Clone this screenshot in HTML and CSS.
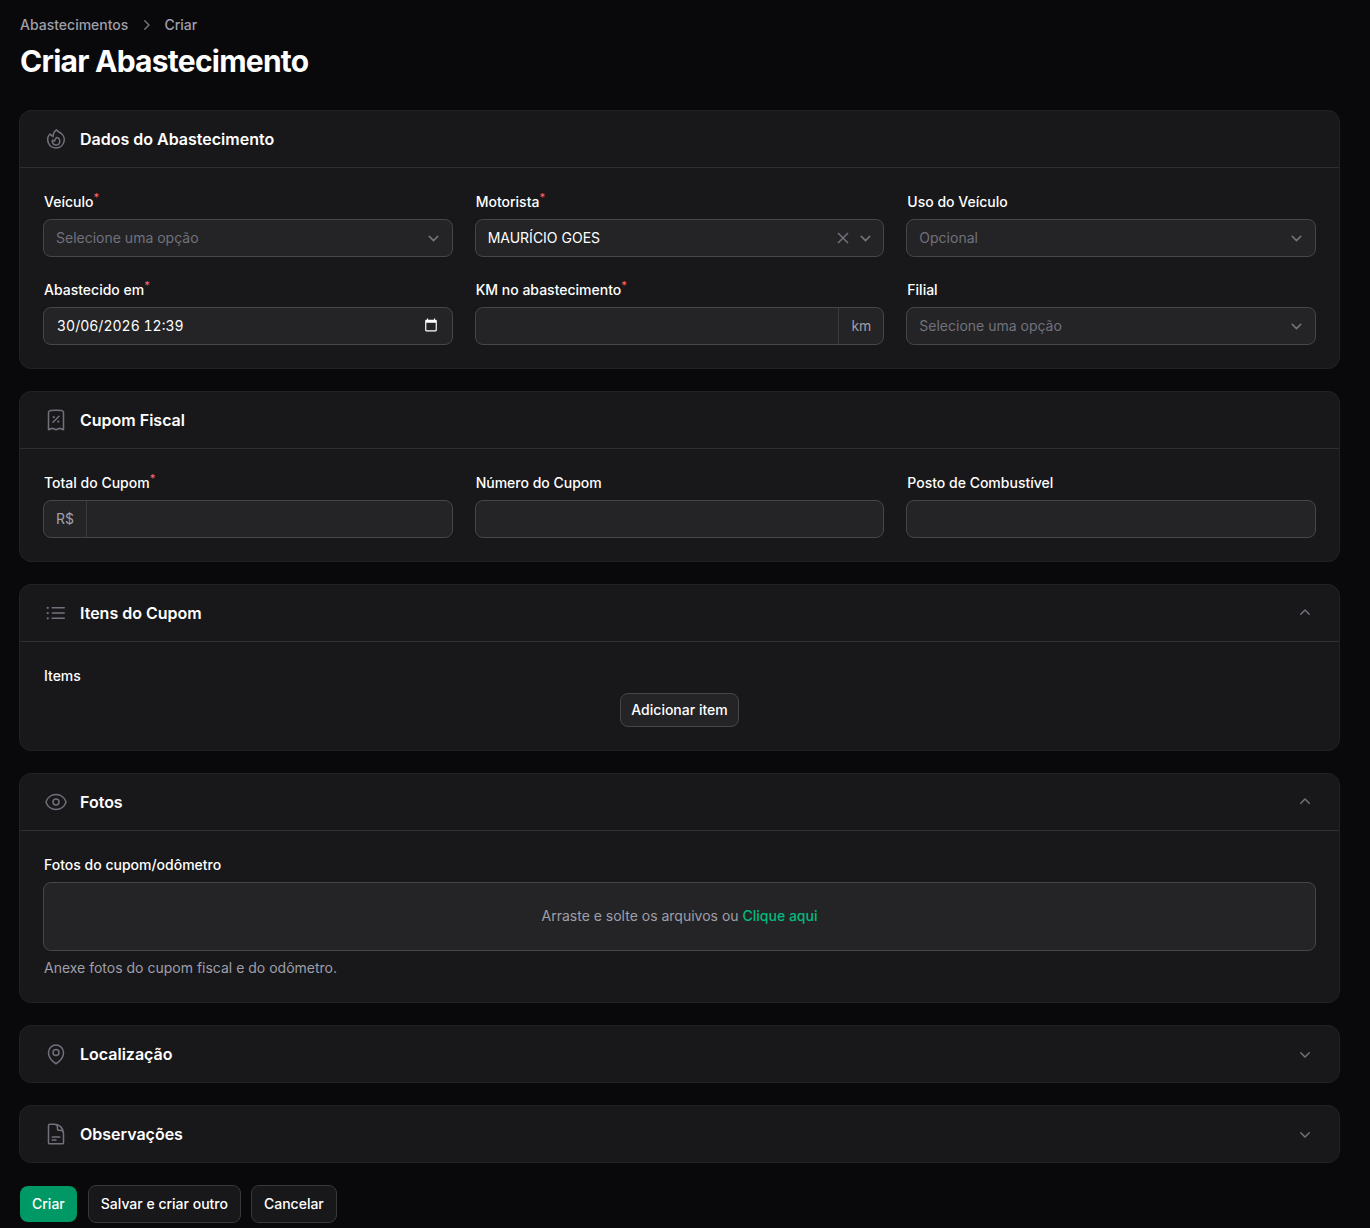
FILE: index.html
```html
<!DOCTYPE html>
<html lang="pt-BR">
<head>
<meta charset="utf-8">
<meta name="viewport" content="width=device-width, initial-scale=1">
<title>Criar Abastecimento</title>
<link rel="stylesheet" href="styles.css">
</head>
<body>
<svg class="sprite" aria-hidden="true">
  <symbol id="chevron-select" viewBox="0 0 20 20"><path d="M6 8l4 4 4-4"/></symbol>
  <symbol id="chevron-down" viewBox="0 0 20 20"><path d="M5.22 8.22a.75.75 0 0 1 1.06 0L10 11.94l3.72-3.72a.75.75 0 1 1 1.06 1.06l-4.25 4.25a.75.75 0 0 1-1.06 0L5.22 9.28a.75.75 0 0 1 0-1.06Z"/></symbol>
  <symbol id="chevron-up" viewBox="0 0 20 20"><path d="M9.47 6.47a.75.75 0 0 1 1.06 0l4.25 4.25a.75.75 0 1 1-1.06 1.06L10 8.06l-3.72 3.72a.75.75 0 0 1-1.06-1.06l4.25-4.25Z"/></symbol>
</svg>
<main class="page">
  <header class="page-header">
    <nav class="breadcrumbs" aria-label="Trilha">
      <a href="#">Abastecimentos</a>
      <svg class="icon-sm" viewBox="0 0 20 20" aria-hidden="true"><path d="M8.22 5.22a.75.75 0 0 1 1.06 0l4.25 4.25a.75.75 0 0 1 0 1.06l-4.25 4.25a.75.75 0 0 1-1.06-1.06L11.94 10 8.22 6.28a.75.75 0 0 1 0-1.06Z"/></svg>
      <a href="#">Criar</a>
    </nav>
    <h1 class="page-title">Criar Abastecimento</h1>
  </header>

  <form class="form" onsubmit="return false">
    <section class="card">
      <header class="card-header">
        <svg class="icon" viewBox="0 0 24 24" aria-hidden="true"><path d="M15.362 5.214A8.252 8.252 0 0 1 12 21 8.25 8.25 0 0 1 6.038 7.047 8.287 8.287 0 0 0 9 9.601a8.983 8.983 0 0 1 3.361-6.867 8.21 8.21 0 0 0 3 2.48Z"/><path d="M12 18a3.75 3.75 0 0 0 .495-7.468 5.99 5.99 0 0 0-1.925 3.547 5.975 5.975 0 0 1-2.133-1.001A3.75 3.75 0 0 0 12 18Z"/></svg>
        <h2 class="card-title">Dados do Abastecimento</h2>
      </header>
      <div class="card-body grid">
        <div class="field">
          <label class="label" for="veiculo">Veículo<sup class="required">*</sup></label>
          <div class="control select">
            <select id="veiculo" class="empty"><option>Selecione uma opção</option></select>
            <svg class="chevron" aria-hidden="true"><use href="#chevron-select"/></svg>
          </div>
        </div>
        <div class="field">
          <label class="label" for="motorista">Motorista<sup class="required">*</sup></label>
          <div class="control select">
            <select id="motorista"><option>MAURÍCIO GOES</option></select>
            <button class="clear" type="button" aria-label="Limpar"><svg viewBox="0 0 12 12" aria-hidden="true"><path d="M1 1l10 10M11 1 1 11"/></svg></button>
            <svg class="chevron" aria-hidden="true"><use href="#chevron-select"/></svg>
          </div>
        </div>
        <div class="field">
          <label class="label" for="uso">Uso do Veículo</label>
          <div class="control select">
            <select id="uso" class="empty"><option>Opcional</option></select>
            <svg class="chevron" aria-hidden="true"><use href="#chevron-select"/></svg>
          </div>
        </div>
        <div class="field">
          <label class="label" for="data">Abastecido em<sup class="required">*</sup></label>
          <div class="control">
            <input id="data" class="date" type="text" value="30/06/2026 12:39">
            <button class="calendar" type="button" aria-label="Abrir calendário"><svg viewBox="0 0 24 24" aria-hidden="true"><path d="M20 3h-1V1h-2v2H7V1H5v2H4c-1.100 0-2 .9-2 2v16c0 1.100.9 2 2 2h16c1.100 0 2-.9 2-2V5c0-1.100-.9-2-2-2zm0 18H4V8h16v13z"/></svg></button>
          </div>
        </div>
        <div class="field">
          <label class="label" for="km">KM no abastecimento<sup class="required">*</sup></label>
          <div class="control">
            <input id="km" type="text">
            <span class="affix suffix">km</span>
          </div>
        </div>
        <div class="field">
          <label class="label" for="filial">Filial</label>
          <div class="control select">
            <select id="filial" class="empty"><option>Selecione uma opção</option></select>
            <svg class="chevron" aria-hidden="true"><use href="#chevron-select"/></svg>
          </div>
        </div>
      </div>
    </section>

    <section class="card">
      <header class="card-header">
        <svg class="icon" viewBox="0 0 24 24" aria-hidden="true"><path d="m9 14.250 6-6m4.500-3.493V21.750l-3.750-1.500-3.750 1.500-3.750-1.500-3.750 1.500V4.757c0-1.108.806-2.057 1.907-2.185a48.507 48.507 0 0 1 11.186 0c1.100.128 1.907 1.077 1.907 2.185ZM9.750 9h.008v.008H9.750V9Zm.375 0a.375.375 0 1 1-.75 0 .375.375 0 0 1 .75 0Zm4.125 4.500h.008v.008h-.008V13.500Zm.375 0a.375.375 0 1 1-.75 0 .375.375 0 0 1 .75 0Z"/></svg>
        <h2 class="card-title">Cupom Fiscal</h2>
      </header>
      <div class="card-body grid">
        <div class="field">
          <label class="label" for="total">Total do Cupom<sup class="required">*</sup></label>
          <div class="control">
            <span class="affix prefix">R$</span>
            <input id="total" type="text">
          </div>
        </div>
        <div class="field">
          <label class="label" for="numero">Número do Cupom</label>
          <div class="control"><input id="numero" type="text"></div>
        </div>
        <div class="field">
          <label class="label" for="posto">Posto de Combustível</label>
          <div class="control"><input id="posto" type="text"></div>
        </div>
      </div>
    </section>

    <section class="card">
      <header class="card-header">
        <svg class="icon" viewBox="0 0 24 24" aria-hidden="true"><path d="M8.250 6.750h12M8.250 12h12m-12 5.250h12M3.750 6.750h.007v.008H3.750V6.750Zm.375 0a.375.375 0 1 1-.75 0 .375.375 0 0 1 .75 0ZM3.750 12h.007v.008H3.750V12Zm.375 0a.375.375 0 1 1-.75 0 .375.375 0 0 1 .75 0Zm-.375 5.250h.007v.008H3.750v-.008Zm.375 0a.375.375 0 1 1-.75 0 .375.375 0 0 1 .75 0Z"/></svg>
        <h2 class="card-title">Itens do Cupom</h2>
        <button class="toggle" type="button" aria-label="Recolher Itens do Cupom" aria-expanded="true"><svg class="icon-sm" aria-hidden="true"><use href="#chevron-up"/></svg></button>
      </header>
      <div class="card-body field">
        <span class="label">Items</span>
        <button class="btn btn-small" type="button">Adicionar item</button>
      </div>
    </section>

    <section class="card">
      <header class="card-header">
        <svg class="icon" viewBox="0 0 24 24" aria-hidden="true"><path d="M2.036 12.322a1.012 1.012 0 0 1 0-.639C3.423 7.510 7.360 4.500 12 4.500c4.638 0 8.573 3.007 9.963 7.178.07.207.07.431 0 .639C20.577 16.490 16.640 19.500 12 19.500c-4.638 0-8.573-3.007-9.963-7.178Z"/><path d="M15 12a3 3 0 1 1-6 0 3 3 0 0 1 6 0Z"/></svg>
        <h2 class="card-title">Fotos</h2>
        <button class="toggle" type="button" aria-label="Recolher Fotos" aria-expanded="true"><svg class="icon-sm" aria-hidden="true"><use href="#chevron-up"/></svg></button>
      </header>
      <div class="card-body field">
        <label class="label" for="fotos">Fotos do cupom/odômetro</label>
        <div class="dropzone">
          <span>Arraste e solte os arquivos ou <label class="browse" for="fotos">Clique aqui</label></span>
          <input id="fotos" class="file" type="file" multiple>
        </div>
        <p class="help">Anexe fotos do cupom fiscal e do odômetro.</p>
      </div>
    </section>

    <section class="card">
      <header class="card-header">
        <svg class="icon" viewBox="0 0 24 24" aria-hidden="true"><path d="M15 10.500a3 3 0 1 1-6 0 3 3 0 0 1 6 0Z"/><path d="M19.500 10.500c0 7.142-7.500 11.250-7.500 11.250S4.500 17.642 4.500 10.500a7.500 7.500 0 1 1 15 0Z"/></svg>
        <h2 class="card-title">Localização</h2>
        <button class="toggle" type="button" aria-label="Expandir Localização" aria-expanded="false"><svg class="icon-sm" aria-hidden="true"><use href="#chevron-down"/></svg></button>
      </header>
    </section>

    <section class="card">
      <header class="card-header">
        <svg class="icon" viewBox="0 0 24 24" aria-hidden="true"><path d="M19.500 14.250v-2.625a3.375 3.375 0 0 0-3.375-3.375h-1.500A1.125 1.125 0 0 1 13.500 7.125v-1.500a3.375 3.375 0 0 0-3.375-3.375H8.250m0 12.750h7.500m-7.500 3H12M10.500 2.250H5.625c-.621 0-1.125.504-1.125 1.125v17.250c0 .621.504 1.125 1.125 1.125h12.750c.621 0 1.125-.504 1.125-1.125V11.250a9 9 0 0 0-9-9Z"/></svg>
        <h2 class="card-title">Observações</h2>
        <button class="toggle" type="button" aria-label="Expandir Observações" aria-expanded="false"><svg class="icon-sm" aria-hidden="true"><use href="#chevron-down"/></svg></button>
      </header>
    </section>

    <div class="actions">
      <button class="btn btn-primary" type="submit">Criar</button>
      <button class="btn btn-dark" type="button">Salvar e criar outro</button>
      <button class="btn btn-dark" type="button">Cancelar</button>
    </div>
  </form>
</main>
</body>
</html>
```
FILE: styles.css
```css
*, *::before, *::after { box-sizing: border-box; }

body {
  margin: 0;
  background: #09090b;
  color: #fff;
  font: 400 14px/20px Inter, "Liberation Sans", sans-serif;
}

h1, h2, p { margin: 0; }
a { color: inherit; text-decoration: none; }
button, input, select { font: inherit; color: inherit; }
button { cursor: pointer; }

.sprite { display: none; }
.icon { flex: none; width: 24px; height: 24px; fill: none; stroke: #71717b; stroke-width: 1.5; stroke-linecap: round; stroke-linejoin: round; }
.icon-sm { flex: none; width: 20px; height: 20px; fill: #71717b; }

.page { padding: 15px 30px 5px 19px; }
.page-header { padding-left: 1px; margin-bottom: 31px; }
.breadcrumbs { display: flex; gap: 8px; color: #9f9fa9; font-weight: 500; }
.page-title { margin-top: 8px; font-size: 30px; line-height: 36px; font-weight: 700; letter-spacing: -0.025em; }

.form { display: flex; flex-direction: column; gap: 22px; }

.card { background: #18181b; border: 1px solid #222225; border-radius: 12px; }
.card-header { display: flex; align-items: center; gap: 12px; padding: 16px 24px; }
.card-title { flex: 1; font-size: 16px; line-height: 24px; font-weight: 600; }
.card-body { border-top: 1px solid #2f2f32; padding: 24px 23px 23px; }

.toggle { display: flex; padding: 0; border: 0; background: none; }

.grid { display: grid; grid-template-columns: repeat(3, minmax(0, 1fr)); gap: 23px 22px; }
.field { display: flex; flex-direction: column; gap: 7px; }
.label { padding-left: 1px; font-weight: 500; }
.required { font-size: 11px; line-height: 0; color: #ff6467; }

.control { display: flex; align-items: center; height: 38px; border: 1px solid #464649; border-radius: 8px; background: #242427; overflow: hidden; }
.control:focus-within { border-color: #00bc7d; }
.control input, .control select { min-width: 0; height: 36px; padding: 0 12px; border: 0; outline: 0; background: none; appearance: none; }
.control input { flex: 1; }
.control .date { padding: 0 13px 1px; font-variant-numeric: tabular-nums; }

.select { display: grid; grid-template-columns: 1fr 12px 36px; }
.select select { grid-area: 1 / 1 / 2 / 4; }
.select select.empty { color: #71717b; }
.select option { background: #242427; }
.chevron { grid-area: 1 / 3; justify-self: center; width: 21px; height: 21px; fill: none; stroke: #71717b; stroke-width: 1.5; stroke-linecap: round; stroke-linejoin: round; pointer-events: none; }
.clear { grid-area: 1 / 2; display: flex; margin: 0 -2px 0 2px; padding: 0; border: 0; background: none; }
.clear svg { width: 12px; height: 12px; fill: none; stroke: #71717b; stroke-width: 1.5; }

.calendar { display: flex; padding: 0 14px 2px; border: 0; background: none; }
.calendar svg { width: 14px; height: 14px; fill: #fff; }

.affix { padding: 8px 12px; color: #9f9fa9; }
.prefix { border-right: 1px solid #3a3a3d; }
.suffix { border-left: 1px solid #3a3a3d; }

.dropzone { display: flex; align-items: center; justify-content: center; min-height: 69px; padding-bottom: 1px; border: 1px solid #464649; border-radius: 8px; background: #242427; color: #9f9fa9; }
.browse { color: #00bc7d; font-weight: 500; cursor: pointer; }
.file { position: absolute; width: 1px; height: 1px; opacity: 0; }
.help { padding: 0 0 1px 1px; color: #9f9fa9; }

.btn { padding: 8px 12px; border: 1px solid #464649; border-radius: 8px; background: #242427; font-weight: 500; }
.btn-small { align-self: center; padding: 6px 10px; }
.btn-dark { border-color: #38383b; background: #18181b; }
.btn-primary { margin: 1px; border: 0; background: #009966; }
.actions { display: flex; flex-wrap: wrap; gap: 10px; }
```
